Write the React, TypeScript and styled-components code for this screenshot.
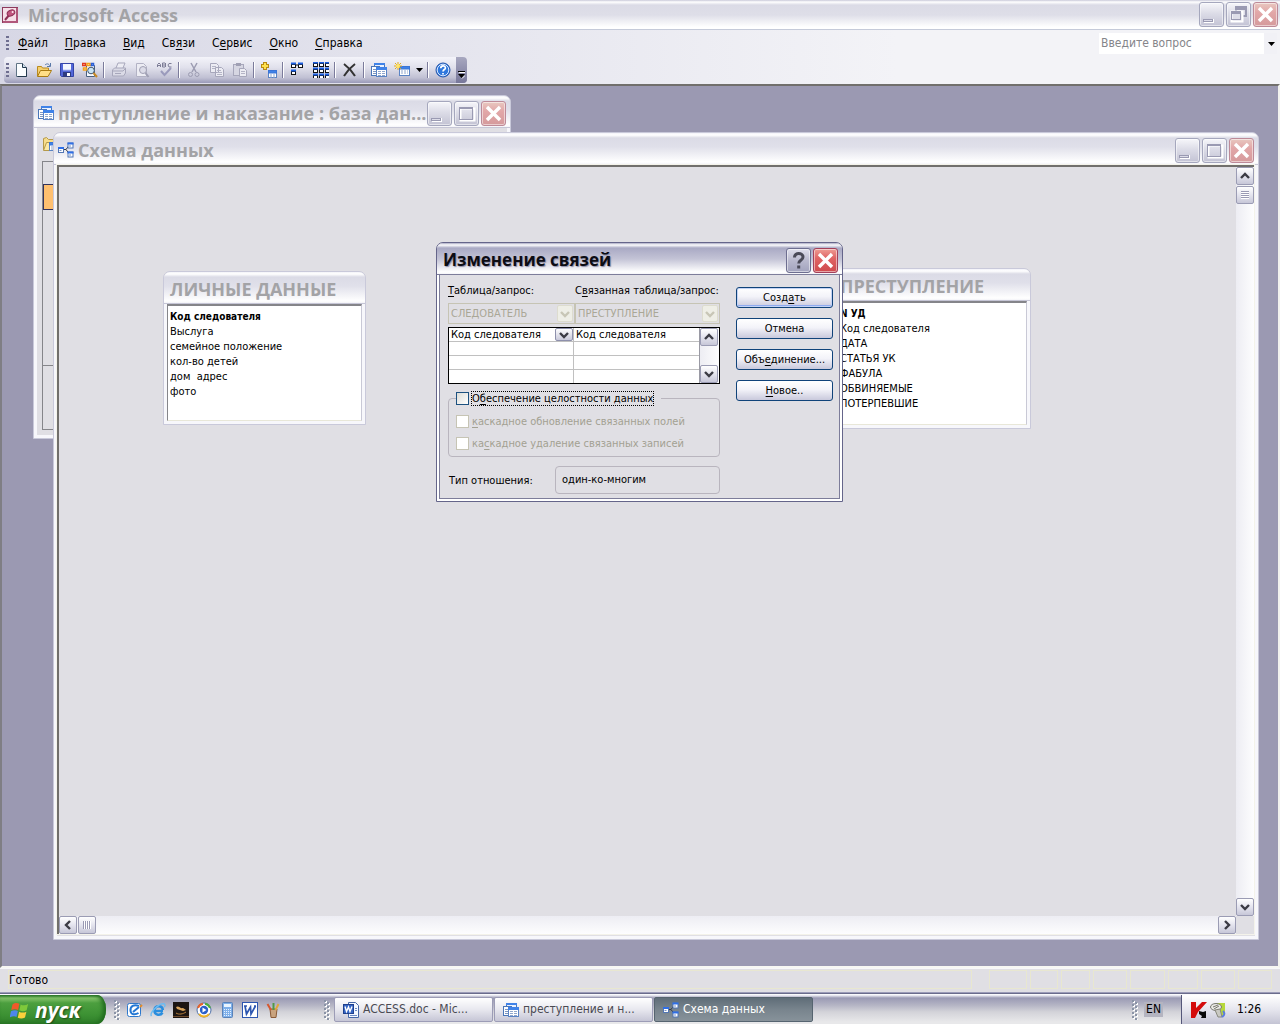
import React from 'react';
import styled, { createGlobalStyle, css } from 'styled-components';

const ui = '"DejaVu Sans Condensed", "DejaVu Sans", sans-serif';
const caption = '"Open Sans", "Noto Sans", sans-serif';

const GlobalStyle = createGlobalStyle`
  *, *::before, *::after { box-sizing: border-box; }
  body { margin: 0; font: 11px/15px ${ui}; color: #000; overflow: hidden; }
  button, select, input, output { font: inherit; color: inherit; margin: 0; }
  button { padding: 0; border: 0; background: none; }
  svg { display: block; flex: none; }
  u { text-underline-offset: 2px; }
`;

/* ---------- icons ---------- */

type IconName =
  | 'key' | 'new' | 'open' | 'save' | 'search' | 'print' | 'preview' | 'spell' | 'cut' | 'copy' | 'paste'
  | 'addTable' | 'direct' | 'all' | 'delete' | 'database' | 'newObject' | 'help' | 'schema' | 'folder'
  | 'outlook' | 'ie' | 'bat' | 'media' | 'calc' | 'word' | 'paint' | 'doc' | 'windows' | 'kaspersky' | 'safe';

const MiniTable = ({ x, y, w = 9, h = 8 }: { x: number; y: number; w?: number; h?: number }) => (
  <g>
    <rect x={x} y={y} width={w} height={h} fill="#fff" stroke="#5b84c4" />
    <rect x={x} y={y} width={w} height={2.5} fill="#3f82e8" stroke="#3a74d6" />
    <path d={`M${x + 1.5} ${y + 4.5}h${w - 3}M${x + 1.5} ${y + 6.5}h${w - 3}`} stroke="#8fa6cc" strokeDasharray="2 1" />
  </g>
);

const Node = ({ x, y }: { x: number; y: number }) => (
  <g>
    <rect x={x} y={y} width="5" height="5" fill="#fff" stroke="#5377b4" />
    <path d={`M${x - 0.5} ${y + 0.5}h6`} stroke="#2f6fe6" strokeWidth="2" />
    <path d={`M${x + 1} ${y + 3}h2`} stroke="#7a94c4" />
  </g>
);

const Box = ({ x, y }: { x: number; y: number }) => (
  <g>
    <rect x={x + 0.5} y={y + 1.5} width="4" height="3" fill="#fff" stroke="#111" />
    <path d={`M${x} ${y + 0.5}h5`} stroke="#1c5fe0" strokeWidth="2" />
  </g>
);

const drawings: Record<IconName, React.ReactNode> = {
  key: (
    <>
      <rect x=".5" y=".5" width="15" height="15" fill="#f6dfe8" stroke="#8d3a5c" />
      <path d="M1 15h14V1" fill="none" stroke="#b0577a" strokeWidth="2" />
      <path d="M3 13l5-6" stroke="#8d2f55" strokeWidth="2" />
      <ellipse cx="9" cy="6" rx="4" ry="2.800" fill="#c2567f" stroke="#8d2f55" transform="rotate(-25 9 6)" />
      <circle cx="10.600" cy="5" r="1" fill="#fbe9f0" />
    </>
  ),
  new: (
    <>
      <path d="M3.500 1.500h6l4 4v9h-10z" fill="#fbfdff" stroke="#5f7384" />
      <path d="M9.500 1.500v4h4" fill="#cfe0ee" stroke="#23384d" />
      <path d="M13.500 6v8.500h-9" fill="none" stroke="#23384d" />
    </>
  ),
  open: (
    <>
      <path d="M1.500 14V4.500h4l1 1.500h6v3" fill="#f5cf6e" stroke="#b98a1d" />
      <path d="M1.500 14.500l3-6h11l-3.500 6z" fill="#ffdf86" stroke="#a97b12" />
      <path d="M9 3c2-2 4-1 5 1M14.500 1v3.500H11" fill="none" stroke="#5878a8" />
    </>
  ),
  save: (
    <>
      <path d="M1.500 1.500h13v13h-12l-1-1z" fill="#5267d8" stroke="#3444a8" />
      <rect x="4" y="2" width="8" height="6" fill="#f3f6ff" />
      <path d="M4 8h8" stroke="#b8c4f2" />
      <rect x="4" y="10" width="8" height="5" fill="#2f3c80" />
      <rect x="8" y="11" width="3" height="3" fill="#fff" />
    </>
  ),
  search: (
    <>
      <path d="M4.500 3.500h8v11h-8z" fill="#f6f9ff" stroke="#49607f" />
      <path d="M.5 1.500h3v2h-3z" fill="#fff" stroke="#e23a1e" strokeWidth="1.500" />
      <path d="M5 1.500h3v2H5z" fill="#fff" stroke="#f4a21b" strokeWidth="1.500" />
      <path d="M9.500 1.500h2v2h-2z" fill="#fff" stroke="#2b5fd8" strokeWidth="1.500" />
      <path d="M1.500 6h3v2h-3z" fill="#fff" stroke="#f4a21b" strokeWidth="1.500" />
      <circle cx="9" cy="8.500" r="3.300" fill="#c9e4f4" stroke="#44566f" />
      <path d="M11.500 11l3.500 4" stroke="#c88a25" strokeWidth="2" />
    </>
  ),
  print: (
    <>
      <path d="M5 6l2-5h7l-2 5" fill="#ececf3" stroke="#a7a7bb" />
      <path d="M1.500 8l2-2h11v5l-2 3h-11z" fill="#dadae6" stroke="#a7a7bb" />
      <path d="M2 9h10l2-2M4 11.500h6" fill="none" stroke="#a7a7bb" />
    </>
  ),
  preview: (
    <>
      <path d="M2.500 1.500h7l3 3v10h-10z" fill="#ececf3" stroke="#b2b2c4" />
      <circle cx="9" cy="8" r="3.500" fill="#dcdce8" stroke="#a0a0b4" />
      <path d="M11.500 11l3 4" stroke="#a0a0b4" strokeWidth="2" />
    </>
  ),
  spell: (
    <>
      <path d="M.5 5V2.500L2 1l1.500 1.500V5M.5 3.500h3M5.500 1v4H8L9 4 8 3l1-1-1-1H5.500M5.500 3H8M14.500 1.500H12L11 3l1 2h2.500" fill="none" stroke="#7d7d96" />
      <path d="M4 9l3.500 4L14 6" fill="none" stroke="#9b9bbc" strokeWidth="2" />
    </>
  ),
  cut: (
    <>
      <path d="M5 1l5 9M11 1L6 10" stroke="#9c9cb2" strokeWidth="1.500" />
      <circle cx="4.500" cy="12.500" r="2" fill="none" stroke="#9c9cb2" />
      <circle cx="11" cy="12.500" r="2" fill="none" stroke="#9c9cb2" />
    </>
  ),
  copy: (
    <>
      <path d="M1.500 1.500h6l2 2v7h-8zM6.500 5.500h6l2 2v7h-8z" fill="#ececf3" stroke="#a7a7bb" />
      <path d="M3 4.500h4M3 6.500h3M8 8.500h4M8 10.500h5M8 12.500h5" stroke="#b4b4c6" />
    </>
  ),
  paste: (
    <>
      <rect x="1.500" y="2.500" width="10" height="11" fill="#d6d6e2" stroke="#a7a7bb" />
      <path d="M4 2.500h5" stroke="#a0a0b4" strokeWidth="3" />
      <path d="M7.500 6.500h5l2 2v6h-7z" fill="#ececf3" stroke="#a7a7bb" />
      <path d="M9 9.500h4M9 11.500h4" stroke="#b4b4c6" />
    </>
  ),
  addTable: (
    <>
      <path d="M4 0v8M0 4h8" stroke="#b88a14" strokeWidth="4" />
      <path d="M4 1v6M1 4h6" stroke="#ffe14d" strokeWidth="2" />
      <MiniTable x={7.5} y={8.5} w={8} h={7} />
    </>
  ),
  direct: (
    <>
      <path d="M5 3h4" stroke="#111" />
      <Box x={1} y={1} />
      <Box x={8} y={1} />
      <Box x={1} y={8} />
    </>
  ),
  all: (
    <>
      <path d="M0 3.500h16M0 9.500h16M0 15h16" stroke="#111" strokeDasharray="1 1" />
      {[0, 6, 12].map((y) => [0, 6, 12].map((x) => <Box key={`${x}-${y}`} x={x} y={y} />))}
    </>
  ),
  delete: <path d="M2 2c4 3 8 7 11 12M13 2C9 5 5 9 2 14" fill="none" stroke="#333" strokeWidth="2" />,
  database: (
    <>
      <rect x="3.500" y="1.500" width="10" height="9" fill="#e9f1ff" stroke="#4a76b8" />
      <path d="M3 2h11" stroke="#3f82e8" strokeWidth="2" />
      <rect x=".5" y="4.500" width="8" height="9" fill="#fff" stroke="#4a76b8" />
      <path d="M2 7.500h3M2 9.500h3M2 11.500h3" stroke="#7d96c0" />
      <rect x="5.500" y="5.500" width="10" height="9" fill="#fff" stroke="#5b84c4" />
      <path d="M5 6.500h11" stroke="#3f82e8" strokeWidth="3" />
      <path d="M7 9.500h7M7 11.500h7M7 13.500h7" stroke="#8fa6cc" strokeDasharray="3 1" />
    </>
  ),
  newObject: (
    <>
      <MiniTable x={5.5} y={4.5} w={10} h={9} />
      <path d="M4 0v8M0 4h8M1 1l6 6M7 1L1 7" stroke="#e0a920" />
      <circle cx="4" cy="4" r="2" fill="#ffe56a" />
    </>
  ),
  help: (
    <>
      <circle cx="8" cy="8" r="7" fill="#2f78dd" stroke="#2554a8" />
      <circle cx="8" cy="8" r="5.800" fill="none" stroke="#d8e8ff" />
      <path d="M5.800 6.200c0-3 4.600-3 4.600-.3C10.400 7.600 8 7.500 8 9.500M8 11v1.600" fill="none" stroke="#fff" strokeWidth="1.700" />
    </>
  ),
  schema: (
    <>
      <path d="M6 7.500h2l3-4M8 7.500l3 4" fill="none" stroke="#333a48" />
      <Node x={0.5} y={5.5} />
      <Node x={10} y={1} />
      <Node x={10} y={10} />
    </>
  ),
  folder: (
    <>
      <path d="M1.500 14V2.500l3-1 2 2h6V6" fill="#f7dd8c" stroke="#b59a4a" />
      <path d="M1.500 14.500l3-8h10v8z" fill="#fbe9a8" stroke="#b59a4a" />
      <MiniTable x={7.5} y={6.5} w={8} h={8} />
    </>
  ),
  outlook: (
    <>
      <rect x=".5" y="1.500" width="13" height="13" rx="2" fill="#fff" stroke="#2d78cc" />
      <path d="M12 4C7 2 3 4 3.500 9c.5 4 5 4 8 2M6 10l6-5" fill="none" stroke="#2277d4" strokeWidth="2" />
      <path d="M13 5l2-2" stroke="#e88b25" strokeWidth="2" />
    </>
  ),
  ie: (
    <>
      <path d="M13 9H4.500c.3 4.500 6 4.800 8 1.800M4.500 8C5 3 12.500 3 12.800 8" fill="none" stroke="#2b8ede" strokeWidth="2.600" />
      <path d="M1.500 14C-1 11 10 0 14.500 2c1 .6.500 2-.3 3" fill="none" stroke="#6cbcf2" strokeWidth="1.400" />
    </>
  ),
  bat: (
    <>
      <rect width="16" height="16" fill="#1c1512" />
      <path d="M3 5c3-2 4 2 7 1l3 2-3 1-6-2z" fill="#d9a45c" />
      <path d="M3 11c3 2 7 1 10-1" fill="none" stroke="#b9803c" />
      <path d="M0 14.500h16" stroke="#6e4a2c" />
    </>
  ),
  media: (
    <>
      <circle cx="8" cy="8" r="7" fill="#fff" stroke="#4b6ea8" />
      <path d="M2 6a6.300 6.300 0 0 1 5-4.300" fill="none" stroke="#e8642c" strokeWidth="2" />
      <path d="M9 1.800A6.300 6.300 0 0 1 14 6" fill="none" stroke="#4fae3c" strokeWidth="2" />
      <path d="M3 12a6.300 6.300 0 0 0 10 0" fill="none" stroke="#f0b428" strokeWidth="2" />
      <circle cx="8" cy="8" r="4.200" fill="#2b5fc8" />
      <path d="M6.500 5.500v5l4-2.500z" fill="#fff" />
    </>
  ),
  calc: (
    <>
      <rect x="3.500" y=".5" width="10" height="15" rx="1" fill="#7fb0ea" stroke="#5a82b8" />
      <rect x="5" y="2" width="7" height="3" fill="#eaf5ff" />
      <path d="M5 7.500h7M5 9.500h7M5 11.500h7M5 13.500h7" stroke="#e8f1fc" strokeDasharray="1 1" />
    </>
  ),
  word: (
    <>
      <rect x=".5" y=".5" width="15" height="15" fill="#fff" stroke="#2d56b0" />
      <path d="M3 4l1.500 8L8.500 5l.5 7 4.500-8M2 4h3M12 4h2" fill="none" stroke="#2d56b0" strokeWidth="1.700" />
    </>
  ),
  paint: (
    <>
      <path d="M5 7h7l-1 8.500H6z" fill="#c9a37e" stroke="#8a5b38" />
      <path d="M6 8L2.500 2" stroke="#d8572e" strokeWidth="2" />
      <path d="M8.500 8V1" stroke="#4f9a46" strokeWidth="2" />
      <path d="M10.500 8l3-6" stroke="#e0a63a" strokeWidth="2" />
    </>
  ),
  doc: (
    <>
      <path d="M5.500.5h7l3 3v12h-10z" fill="#f4f8ff" stroke="#4566a6" />
      <path d="M12 6.500h2M12 8.500h2M7 13.500h7" stroke="#6d8bc4" />
      <rect x=".5" y="2.500" width="10" height="9" fill="#3565c4" stroke="#1e3f8c" />
      <path d="M2 4.500l1.500 5L5.500 5 7 9.500l2-5" fill="none" stroke="#fff" strokeWidth="1.400" />
    </>
  ),
  windows: (
    <>
      <path d="M2 3.500C4 2 6 2.200 7.500 3L6.500 8C5 7.200 3 7 1 8z" fill="#f0592a" />
      <path d="M8.500 3.500c1.800 1 4 1 6-.3l-1.200 5c-1.800 1-4 1-5.800 0z" fill="#7fc93b" />
      <path d="M.8 9c2-1 4-1 5.500-.2L5.200 13.500C3.500 12.800 1.800 13-.3 14z" fill="#4d86ea" />
      <path d="M7.300 9.300c1.800 1 4 1 5.800 0L12 14c-2 1.200-4 1-5.800.2z" fill="#fbd03c" />
    </>
  ),
  kaspersky: (
    <>
      <path d="M0 0h5v6l6-6h5L7 10l-3 6H0z" fill="#d40c0c" />
      <path d="M8 9l4 1 3-1v7h-5l1-2-3-2z" fill="#080808" />
    </>
  ),
  safe: (
    <>
      <path d="M6 1h9v11l-4 3-5-4z" fill="#b6d83a" />
      <ellipse cx="6" cy="5" rx="5.500" ry="3.500" fill="#e9e9e4" stroke="#77776f" />
      <path d="M3 5l5-2M4 7l5-3" stroke="#77776f" />
      <path d="M5 8l3 7h4l-2-8z" fill="#c9c9c2" stroke="#88887e" />
      <path d="M13 9c2 2 2 4-1 6" fill="none" stroke="#5b7be0" strokeWidth="2" />
    </>
  ),
};

const Icon = ({ name, size = 16 }: { name: IconName; size?: number }) => (
  <svg width={size} height={size} viewBox="0 0 16 16" aria-hidden="true">{drawings[name]}</svg>
);

const chevrons = {
  up: 'M1 7l4-4 4 4',
  down: 'M1 3l4 4 4-4',
  left: 'M7 1L3 5l4 4',
  right: 'M3 1l4 4-4 4',
};

const Chevron = ({ to, color = '#3b3b44' }: { to: keyof typeof chevrons; color?: string }) => (
  <svg width="10" height="10" viewBox="0 0 10 10" aria-hidden="true">
    <path d={chevrons[to]} fill="none" stroke={color} strokeWidth="2.400" />
  </svg>
);

const Triangle = () => (
  <svg width="7" height="4" viewBox="0 0 7 4" aria-hidden="true"><path d="M0 0h7L3.500 4z" /></svg>
);

/* ---------- window chrome ---------- */

type Glyph = 'min' | 'max' | 'restore' | 'close' | 'help';

const CaptionButton = styled.button<{ $active?: boolean; $close?: boolean }>`
  display: grid;
  place-items: center;
  width: 25px;
  height: 25px;
  border: 1px solid #a5a7bd;
  border-radius: 3px;
  background: linear-gradient(#f6f6fa, #dcdce7 45%, #c3c3d4);
  box-shadow: inset 0 0 0 1px rgba(255, 255, 255, 0.5);
  ${(p) => p.$active && css`
    border-color: #6d6e90;
    background: linear-gradient(#dfdfec, #b9b9ce 50%, #a2a3bd);
  `}
  ${(p) => p.$close && css`
    border-color: #bd8a98;
    background: linear-gradient(#e8c8c0, #e2a7a8 40%, #d59a9c);
  `}
  ${(p) => p.$close && p.$active && css`
    border-color: #a3405a;
    background: linear-gradient(#ee9c94, #e06464 40%, #cf4a4e);
  `}
`;

const WinButton = ({ glyph, active }: { glyph: Glyph; active?: boolean }) => (
  <CaptionButton type="button" aria-label={glyph} $active={active} $close={glyph === 'close'}>
    <svg width="21" height="21" viewBox="0 0 21 21" aria-hidden="true">
      {glyph === 'min' && (
        <>
          <rect x="3" y="15" width="10" height="4" fill="#fff" />
          <rect x="2.500" y="15.500" width="9" height="2" fill="#dcdce8" stroke="#9a9ab2" />
        </>
      )}
      {glyph === 'max' && (
        <>
          <rect x="4.500" y="5.500" width="14" height="12" fill="none" stroke="#fff" strokeWidth="2" />
          <rect x="3.500" y="4.500" width="13" height="12" fill="none" stroke="#9a9ab2" />
          <path d="M4 5.500h13" stroke="#9a9ab2" />
        </>
      )}
      {glyph === 'restore' && (
        <>
          <rect x="8" y="3" width="10" height="9" fill="#dedee8" stroke="#9a9ab2" strokeWidth="2" />
          <path d="M7 5h10" stroke="#9a9ab2" strokeWidth="2" />
          <rect x="3.500" y="7.500" width="11" height="10" fill="#dedee8" stroke="#fff" strokeWidth="2" />
          <rect x="3.500" y="7.500" width="9" height="8" fill="none" stroke="#9a9ab2" />
          <path d="M3 9h10" stroke="#9a9ab2" strokeWidth="2" />
        </>
      )}
      {glyph === 'close' && <path d="M4 4l13 13M17 4L4 17" stroke="#fff" strokeWidth="3.400" />}
      {glyph === 'help' && (
        <path d="M6.500 7.500c0-5.500 8.500-5 8.500-.5 0 3.500-4.300 3-4.300 6.500M10.700 15.500v3" fill="none" stroke="#4a4a58" strokeWidth="3" />
      )}
    </svg>
  </CaptionButton>
);

const Caption = styled.header<{ $active?: boolean }>`
  display: flex;
  align-items: center;
  gap: 2px;
  height: 32px;
  padding: 3px 4px 0 4px;
  color: ${(p) => (p.$active ? '#0c0c14' : '#a3a3a6')};
  background: ${(p) => (p.$active
    ? 'linear-gradient(#a9a9c3 0, #fdfdfe 2px, #a9a9c4 5px, #c4c4d6 16px, #fff 29px, #f4f4f8)'
    : 'linear-gradient(#f2f2f8 0, #fff 2px, #dbdbe6 5px, #e0e0ea 14px, #fff 29px, #f4f4f8)')};
  border-bottom: 1px solid ${(p) => (p.$active ? '#7d7d9a' : '#c6c6d6')};
`;

const CaptionText = styled.h2<{ $active?: boolean }>`
  flex: 1;
  min-width: 0;
  margin: 0;
  padding: 0 2px;
  font: bold ${(p) => (p.$active ? 17 : 18)}px/26px ${caption};
  white-space: nowrap;
  text-shadow: ${(p) => (p.$active ? '1px 1px 1px #8f8fa8' : 'none')};
`;

const CaptionButtons = styled.div`
  display: flex;
  gap: 2px;
`;

const Frame = styled.section<{ $active?: boolean }>`
  position: absolute;
  display: flex;
  flex-direction: column;
  overflow: hidden;
  border: 1px solid ${(p) => (p.$active ? '#65658a' : '#c9c9da')};
  border-radius: 7px 7px 0 0;
  background: #e0dfe4;
`;

const FrameBody = styled.div<{ $active?: boolean }>`
  flex: 1;
  display: flex;
  min-height: 0;
  border: solid ${(p) => (p.$active ? '#fff' : '#f7f7fb')};
  border-width: ${(p) => (p.$active ? '0 2px 2px' : '0 3px 3px')};
`;

/* ---------- application bars ---------- */

const Screen = styled.div`
  display: flex;
  flex-direction: column;
  height: 100vh;
  background: #e0dfe4;
`;

const AppCaption = styled.header`
  display: flex;
  align-items: center;
  gap: 8px;
  height: 30px;
  padding: 0 2px;
  border-bottom: 1px solid #c5cad9;
  color: #a3a3a6;
  background: linear-gradient(#c9c9d9 0, #fff 2px, #dbdbe6 5px, #dedee8 15px, #fff 27px);
`;

const MenuBar = styled.nav`
  display: flex;
  align-items: center;
  height: 27px;
  padding-left: 6px;
  background: linear-gradient(90deg, #d7d7e5, #f3f3f7 70%);
`;

const Grip = styled.span`
  width: 3px;
  height: 15px;
  background: repeating-linear-gradient(#6f6f90 0 2px, transparent 2px 4px);
`;

const MenuItem = styled.button`
  padding: 0 8px 0 9px;
  font-size: 12px;
`;

const Ask = styled.label`
  display: flex;
  align-items: center;
  width: 178px;
  height: 21px;
  margin: 0 3px 0 auto;
  padding: 0 2px;
  background: linear-gradient(90deg, #fff 165px, #f1f1f6 165px);
`;

const AskInput = styled.input`
  flex: 1;
  min-width: 0;
  padding: 0;
  border: 0;
  outline: 0;
  background: none;
  font-size: 12px;
  &::placeholder { color: #85858a; opacity: 1; }
`;

const ToolRow = styled.div`
  padding: 0 4px 1px;
  height: 27px;
  background: linear-gradient(90deg, #d7d7e5, #f3f3f7 70%);
`;

const ToolBar = styled.div`
  display: flex;
  align-items: center;
  width: max-content;
  height: 26px;
  padding-left: 2px;
  border-radius: 4px;
  overflow: hidden;
  background: linear-gradient(#f4f4fa, #e1e1ec 40%, #c0c0d3 80%, #9a9ab8);
`;

const Tool = styled.button`
  display: grid;
  place-items: center;
  width: 23px;
  height: 23px;
`;

const Separator = styled.span`
  width: 2px;
  height: 16px;
  margin: 0 2px;
  background: linear-gradient(90deg, #7b7b9b 50%, #fff 50%);
`;

const ToolMore = styled.button`
  display: grid;
  place-items: center;
  width: 12px;
  height: 23px;
`;

const Overflow = styled.button`
  display: grid;
  place-items: end center;
  width: 11px;
  height: 26px;
  padding-bottom: 4px;
  margin-left: 2px;
  background: linear-gradient(#a8a8c0, #77779a);
`;

const Workspace = styled.main`
  position: relative;
  flex: 1;
  border: 2px solid #716f6c;
  border-left-color: #7f7e84;
  border-right-color: #f2f2ee;
  border-bottom-color: #f7f7f3;
  background: #9b99b2;
`;

const StatusBar = styled.footer`
  display: flex;
  gap: 3px;
  height: 25px;
  padding: 1px 8px 3px;
  border-top: 1px solid #f7f7fa;
  border-bottom: 1px solid #9c9cb8;
`;

const StatusCell = styled.div<{ $w?: number; $gap?: number }>`
  flex: ${(p) => (p.$w ? `0 0 ${p.$w}px` : '1')};
  margin-right: ${(p) => p.$gap ?? 0}px;
  border: 1px solid #e8e7d0;
  font-size: 12px;
  line-height: 18px;
`;

/* ---------- database window ---------- */

const DbFrame = styled(Frame)`
  left: 31px;
  top: 9px;
  width: 478px;
  height: 344px;
`;

const DbBody = styled.div`
  flex: 1;
  padding: 8px 5px;
`;

const DbSidebar = styled.div`
  display: flex;
  flex-direction: column;
  height: 269px;
  margin-top: 9px;
  padding-top: 22px;
  border: 1px solid #85858a;
`;

const DbSelected = styled.div`
  height: 26px;
  border: 1px solid #34345c;
  background: #ffc06f;
`;

const DbGroupLine = styled.div`
  margin-top: auto;
  margin-bottom: 63px;
  border-top: 1px solid #85858a;
`;

/* ---------- relationships window ---------- */

const SchemaFrame = styled(Frame)`
  inset: 46px 19px 26px 51px;
`;

const Client = styled.div`
  flex: 1;
  display: grid;
  grid-template-columns: minmax(0, 1fr) 18px;
  grid-template-rows: minmax(0, 1fr) 18px;
  border: solid #716f6c;
  border-width: 2px 0 0 2px;
  box-shadow: 0 0 0 1px #f4f3ea;
  margin: 0 1px 2px 0;
`;

const Canvas = styled.div`
  position: relative;
`;

const Track = styled.div<{ $vertical?: boolean }>`
  display: flex;
  justify-content: space-between;
  flex-direction: ${(p) => (p.$vertical ? 'column' : 'row')};
  background: linear-gradient(${(p) => (p.$vertical ? '90deg' : '180deg')}, #ededf3, #fdfdfe);
`;

const TrackStart = styled.div<{ $vertical?: boolean }>`
  display: flex;
  gap: 1px;
  flex-direction: ${(p) => (p.$vertical ? 'column' : 'row')};
`;

const ScrollButton = styled.button`
  display: grid;
  place-items: center;
  width: 18px;
  height: 18px;
  border: 1px solid #9b9cb4;
  border-radius: 2px;
  background: linear-gradient(#fff, #e4e4ee 50%, #c7c7d8);
`;

const Thumb = styled(ScrollButton)<{ $vertical?: boolean }>`
  &::before {
    content: '';
    width: 8px;
    height: 8px;
    background: repeating-linear-gradient(${(p) => (p.$vertical ? '180deg' : '90deg')}, #9a9ab4 0 1px, #fff 1px 2px);
  }
`;

const TableFrame = styled(Frame)<{ $x: number; $y: number; $w: number; $h: number }>`
  left: ${(p) => p.$x}px;
  top: ${(p) => p.$y}px;
  width: ${(p) => p.$w}px;
  height: ${(p) => p.$h}px;
`;

const FieldList = styled.ul`
  flex: 1;
  margin: 0;
  padding: 3px 2px;
  list-style: none;
  border: 1px solid #85858a;
  border-top-width: 2px;
  border-right-color: #c9c9d6;
  border-bottom-color: #e8e7d8;
  background: #fff;
`;

const Field = styled.li<{ $key?: boolean }>`
  ${(p) => p.$key && css`
    font-size: 10px;
    font-weight: bold;
  `}
  white-space: pre;
`;

const TableWindow = ({ title, fields, ...at }: { title: string; fields: string[]; $x: number; $y: number; $w: number; $h: number }) => (
  <TableFrame {...at}>
    <Caption><CaptionText>{title}</CaptionText></Caption>
    <FrameBody>
      <FieldList>{fields.map((f, i) => <Field key={f} $key={i === 0}>{f}</Field>)}</FieldList>
    </FrameBody>
  </TableFrame>
);

/* ---------- dialog ---------- */

const DialogFrame = styled(Frame)`
  left: 434px;
  top: 156px;
  width: 407px;
`;

const DialogBody = styled.form`
  flex: 1;
  display: grid;
  grid-template-columns: 272px 97px;
  justify-content: space-between;
  padding: 8px 6px 4px 8px;
  border: 1px solid #7d7d9a;
  border-top: 0;
`;

const Columns = styled.div`
  display: grid;
  grid-template-columns: 127px 1fr;
`;

const ColumnLabel = styled.label`
  padding-bottom: 5px;
  white-space: nowrap;
`;

const ComboBox = styled.span<{ $off?: boolean }>`
  display: grid;
  grid-template-columns: 1fr 18px;
  height: ${(p) => (p.$off ? 21 : 13)}px;
  border: ${(p) => (p.$off ? '1px solid #c6c4b4' : '0')};
  color: ${(p) => (p.$off ? '#aaa796' : '#000')};
  & > select {
    grid-area: 1 / 1 / 2 / 3;
    min-width: 0;
    padding: 0 0 0 2px;
    border: 0;
    outline: 0;
    appearance: none;
    background: none;
    opacity: 1;
    line-height: 13px;
  }
`;

const ComboArrow = styled.span<{ $off?: boolean }>`
  grid-area: 1 / 2;
  display: grid;
  place-items: center;
  margin: ${(p) => (p.$off ? '1px' : '0')};
  border: 1px solid ${(p) => (p.$off ? '#dddccf' : '#8e90ac')};
  border-radius: 2px;
  background: ${(p) => (p.$off ? '#eeeee6' : 'linear-gradient(#fdfdfe, #c9c9da)')};
  pointer-events: none;
`;

const Combo = ({ id, label, value, off }: { id?: string; label?: string; value: string; off?: boolean }) => (
  <ComboBox $off={off}>
    <select id={id} aria-label={label} disabled={off} defaultValue={value}><option>{value}</option></select>
    <ComboArrow $off={off}><Chevron to="down" color={off ? '#c8c6b6' : undefined} /></ComboArrow>
  </ComboBox>
);

const GridBox = styled.div`
  display: grid;
  grid-template-columns: 1fr 19px;
  margin-top: 3px;
  border: 1px solid #000;
  background: #fff;
`;

const JoinTable = styled.table`
  width: 100%;
  table-layout: fixed;
  border-collapse: separate;
  border-spacing: 0;
  border-right: 1px solid #9a9aa4;
  td {
    height: 14px;
    padding: 0;
    line-height: 13px;
    border-bottom: 1px solid #c0c0c0;
  }
  td:first-child { width: 124px; }
  tr:last-child td { height: 13px; border-bottom: 0; }
  td + td { padding-left: 2px; border-left: 1px solid #c0c0c0; }
`;

const Options = styled.fieldset`
  min-width: 0;
  margin: 7px 0 0;
  padding: 4px 7px 2px;
  border: 1px solid #b9b5be;
  border-radius: 4px;
`;

const OptionsLegend = styled.legend`
  padding: 0 7px 0 0;
`;

const Check = styled.label<{ $off?: boolean; $focus?: boolean }>`
  display: flex;
  align-items: center;
  gap: 2px;
  height: ${(p) => (p.$focus ? 15 : 22)}px;
  color: ${(p) => (p.$off ? '#a3a192' : '#000')};
  white-space: nowrap;
  & > input {
    appearance: none;
    width: 13px;
    height: 13px;
    border: 1px solid ${(p) => (p.$off ? '#c6c4b4' : '#1c5180')};
    background: ${(p) => (p.$off ? '#fff' : 'linear-gradient(135deg, #dcdcd7, #fff)')};
  }
  & > span { border: ${(p) => (p.$focus ? '1px dotted #000' : '1px solid transparent')}; line-height: 13px; }
`;

const Relation = styled.div`
  display: grid;
  grid-template-columns: 107px 1fr;
  align-items: center;
  margin-top: 9px;
  label { padding-left: 1px; }
  output {
    height: 28px;
    padding-left: 6px;
    border: 1px solid #b9b5be;
    border-radius: 4px;
    line-height: 26px;
  }
`;

const Actions = styled.div`
  display: flex;
  flex-direction: column;
  gap: 10px;
  padding-top: 4px;
`;

const Action = styled.button<{ $default?: boolean }>`
  height: 21px;
  border: 1px solid #10437a;
  border-radius: 3px;
  background: linear-gradient(#fff, #f3f3f9 45%, #c9c9dc);
  box-shadow: ${(p) => (p.$default ? 'inset 0 0 0 1px #c3d3f5, inset 0 -2px 0 #8fabf0' : 'none')};
`;

/* ---------- taskbar ---------- */

const TaskBar = styled.footer`
  display: flex;
  align-items: stretch;
  height: 31px;
  padding-top: 1px;
  border-top: 1px solid #6a6c8c;
  background: linear-gradient(#fff 0, #f5f5fa 1px, #9a9ab4 4px, #b4b4c4 11px, #d3d3d9 18px, #e8e8ea 28px);
`;

const Start = styled.button`
  display: flex;
  align-items: center;
  gap: 5px;
  width: 106px;
  padding-left: 10px;
  border-radius: 0 9px 9px 0 / 0 14px 14px 0;
  color: #fff;
  font: italic bold 21px/26px ${caption};
  text-shadow: 1px 1px 2px #1d4a18;
  background: linear-gradient(#2f7d2e 0, #86c46c 3px, #4c9f3f 8px, #3c9133 20px, #2e7d29);
  box-shadow: inset -3px 0 4px #1f6a1d;
`;

const Dots = styled.svg`
  align-self: center;
`;

const TaskGrip = () => (
  <Dots width="6" height="20" viewBox="0 0 6 20" aria-hidden="true">
    {[0, 4, 8, 12, 16].map((y) => (
      <g key={y}>
        <path d={`M1 ${y + 1}h2v2H1zM4 ${y + 3}h2v2H4z`} fill="#fff" />
        <path d={`M0 ${y}h2v2H0zM3 ${y + 2}h2v2H3z`} fill="#8a93a6" />
      </g>
    ))}
  </Dots>
);

const QuickLaunch = styled.nav`
  display: flex;
  align-items: center;
  width: 224px;
  padding-left: 8px;
  & > button { display: grid; place-items: center; width: 23px; height: 23px; }
  & > svg:first-child { margin-right: 3px; }
  & > svg:last-child { margin-left: auto; }
`;

const Tasks = styled.nav`
  flex: 1;
  display: flex;
  gap: 1px;
  padding: 2px 0 0 4px;
`;

const Task = styled.button<{ $active?: boolean }>`
  display: flex;
  align-items: center;
  gap: 4px;
  width: 159px;
  height: 25px;
  padding-left: 8px;
  border: 1px solid ${(p) => (p.$active ? '#566470' : '#9c9cb6')};
  border-radius: 2px;
  color: ${(p) => (p.$active ? '#fff' : '#4a4a52')};
  font-size: 12px;
  background: ${(p) => (p.$active
    ? 'linear-gradient(#5f6d78, #78848d 50%, #87929a)'
    : 'linear-gradient(#fff, #e8e8ef 50%, #c6c6d6)')};
`;

const Language = styled.span`
  align-self: center;
  margin: 0 18px 0 6px;
  padding: 0 2px;
  background: #b4b4c0;
  font-size: 12px;
`;

const Tray = styled.div`
  display: flex;
  align-items: center;
  gap: 3px;
  width: 99px;
  padding-left: 9px;
  border-left: 1px solid #55577a;
  font-size: 12px;
  background: linear-gradient(#fff, #e6e6ee 50%, #c4c4d4);
  time { margin-left: 8px; }
`;

/* ---------- page ---------- */

const menus = [['', 'Ф', 'айл'], ['', 'П', 'равка'], ['', 'В', 'ид'], ['Св', 'я', 'зи'], ['С', 'е', 'рвис'], ['', 'О', 'кно'], ['', 'С', 'правка']];
const tools: IconName[][] = [
  ['new', 'open', 'save', 'search'],
  ['print', 'preview', 'spell'],
  ['cut', 'copy', 'paste'],
  ['addTable'],
  ['direct', 'all'],
  ['delete'],
  ['database', 'newObject'],
];
const quick: IconName[] = ['outlook', 'ie', 'bat', 'media', 'calc', 'word', 'paint'];
const statusCells = [38, 28, 29, 34, 35, 30, 34, 34];

export default function App() {
  return (
    <Screen>
      <GlobalStyle />
      <AppCaption>
        <Icon name="key" />
        <CaptionText as="h1">Microsoft Access</CaptionText>
        <CaptionButtons>
          <WinButton glyph="min" />
          <WinButton glyph="restore" />
          <WinButton glyph="close" />
        </CaptionButtons>
      </AppCaption>
      <MenuBar>
        <Grip />
        {menus.map(([a, b, c]) => <MenuItem type="button" key={a + b + c}>{a}<u>{b}</u>{c}</MenuItem>)}
        <Ask>
          <AskInput aria-label="Введите вопрос" placeholder="Введите вопрос" />
          <Triangle />
        </Ask>
      </MenuBar>
      <ToolRow>
        <ToolBar role="toolbar">
          <Grip />
          {tools.map((group) => (
            <React.Fragment key={group[0]}>
              {group.map((t) => <Tool type="button" key={t} aria-label={t}><Icon name={t} /></Tool>)}
              {group[0] === 'database' && <ToolMore type="button" aria-label="more"><Triangle /></ToolMore>}
              <Separator />
            </React.Fragment>
          ))}
          <Tool type="button" aria-label="help"><Icon name="help" /></Tool>
          <Overflow type="button" aria-label="options">
            <svg width="7" height="8" viewBox="0 0 7 8" aria-hidden="true">
              <path d="M0 0h7v1H0zM0 3h7L3.500 7z" />
              <path d="M1 1.500h6M4 7.500l3-3" stroke="#fff" />
            </svg>
          </Overflow>
        </ToolBar>
      </ToolRow>

      <Workspace>
        <DbFrame>
          <Caption>
            <Icon name="database" />
            <CaptionText>преступление и наказание : база дан...</CaptionText>
            <CaptionButtons>
              <WinButton glyph="min" />
              <WinButton glyph="max" />
              <WinButton glyph="close" />
            </CaptionButtons>
          </Caption>
          <FrameBody>
            <DbBody>
              <Icon name="folder" />
              <DbSidebar>
                <DbSelected />
                <DbGroupLine />
              </DbSidebar>
            </DbBody>
          </FrameBody>
        </DbFrame>

        <SchemaFrame>
          <Caption>
            <Icon name="schema" />
            <CaptionText>Схема данных</CaptionText>
            <CaptionButtons>
              <WinButton glyph="min" />
              <WinButton glyph="max" />
              <WinButton glyph="close" />
            </CaptionButtons>
          </Caption>
          <FrameBody>
            <Client>
              <Canvas>
                <TableWindow
                  title="ЛИЧНЫЕ ДАННЫЕ"
                  fields={['Код следователя', 'Выслуга', 'семейное положение', 'кол-во детей', 'дом  адрес', 'фото']}
                  $x={104} $y={104} $w={203} $h={154}
                />
                <TableWindow
                  title="ПРЕСТУПЛЕНИЕ"
                  fields={['N УД', 'Код следователя', 'ДАТА', 'СТАТЬЯ УК', 'ФАБУЛА', 'ОБВИНЯЕМЫЕ', 'ПОТЕРПЕВШИЕ']}
                  $x={774} $y={101} $w={198} $h={161}
                />
              </Canvas>
              <Track $vertical>
                <TrackStart $vertical>
                  <ScrollButton type="button" aria-label="up"><Chevron to="up" /></ScrollButton>
                  <Thumb type="button" aria-label="scroll" $vertical />
                </TrackStart>
                <ScrollButton type="button" aria-label="down"><Chevron to="down" /></ScrollButton>
              </Track>
              <Track>
                <TrackStart>
                  <ScrollButton type="button" aria-label="left"><Chevron to="left" /></ScrollButton>
                  <Thumb type="button" aria-label="scroll" />
                </TrackStart>
                <ScrollButton type="button" aria-label="right"><Chevron to="right" /></ScrollButton>
              </Track>
            </Client>
          </FrameBody>
        </SchemaFrame>

        <DialogFrame $active role="dialog">
          <Caption $active>
            <CaptionText $active>Изменение связей</CaptionText>
            <CaptionButtons>
              <WinButton glyph="help" active />
              <WinButton glyph="close" active />
            </CaptionButtons>
          </Caption>
          <FrameBody $active>
            <DialogBody>
              <div>
                <Columns>
                  <ColumnLabel htmlFor="left"><u>Т</u>аблица/запрос:</ColumnLabel>
                  <ColumnLabel htmlFor="right">С<u>в</u>язанная таблица/запрос:</ColumnLabel>
                  <Combo id="left" value="СЛЕДОВАТЕЛЬ" off />
                  <Combo id="right" value="ПРЕСТУПЛЕНИЕ" off />
                </Columns>
                <GridBox>
                  <JoinTable>
                    <tbody>
                      <tr><td><Combo label="Поле" value="Код следователя" /></td><td>Код следователя</td></tr>
                      <tr><td /><td /></tr>
                      <tr><td /><td /></tr>
                      <tr><td /><td /></tr>
                    </tbody>
                  </JoinTable>
                  <Track $vertical>
                    <ScrollButton type="button" aria-label="up"><Chevron to="up" /></ScrollButton>
                    <ScrollButton type="button" aria-label="down"><Chevron to="down" /></ScrollButton>
                  </Track>
                </GridBox>
                <Options>
                  <OptionsLegend>
                    <Check $focus><input type="checkbox" /><span>О<u>б</u>еспечение целостности данных</span></Check>
                  </OptionsLegend>
                  <Check $off><input type="checkbox" disabled /><span><u>к</u>аскадное обновление связанных полей</span></Check>
                  <Check $off><input type="checkbox" disabled /><span>ка<u>с</u>кадное удаление связанных записей</span></Check>
                </Options>
                <Relation>
                  <label htmlFor="relation">Тип отношения:</label>
                  <output id="relation">один-ко-многим</output>
                </Relation>
              </div>
              <Actions>
                <Action type="button" $default>Созд<u>а</u>ть</Action>
                <Action type="button">Отмена</Action>
                <Action type="button">Объ<u>е</u>динение...</Action>
                <Action type="button"><u>Н</u>овое..</Action>
              </Actions>
            </DialogBody>
          </FrameBody>
        </DialogFrame>
      </Workspace>

      <StatusBar>
        <StatusCell $gap={14}>Готово</StatusCell>
        {statusCells.map((w, i) => <StatusCell key={i} $w={w} />)}
      </StatusBar>

      <TaskBar>
        <Start type="button"><Icon name="windows" size={20} />пуск</Start>
        <QuickLaunch>
          <TaskGrip />
          {quick.map((q) => <button type="button" key={q} aria-label={q}><Icon name={q} /></button>)}
          <TaskGrip />
        </QuickLaunch>
        <Tasks>
          <Task type="button"><Icon name="doc" />ACCESS.doc - Mic...</Task>
          <Task type="button"><Icon name="database" />преступление и н...</Task>
          <Task type="button" $active><Icon name="schema" />Схема данных</Task>
        </Tasks>
        <TaskGrip />
        <Language>EN</Language>
        <Tray>
          <Icon name="kaspersky" />
          <Icon name="safe" />
          <time>1:26</time>
        </Tray>
      </TaskBar>
    </Screen>
  );
}
